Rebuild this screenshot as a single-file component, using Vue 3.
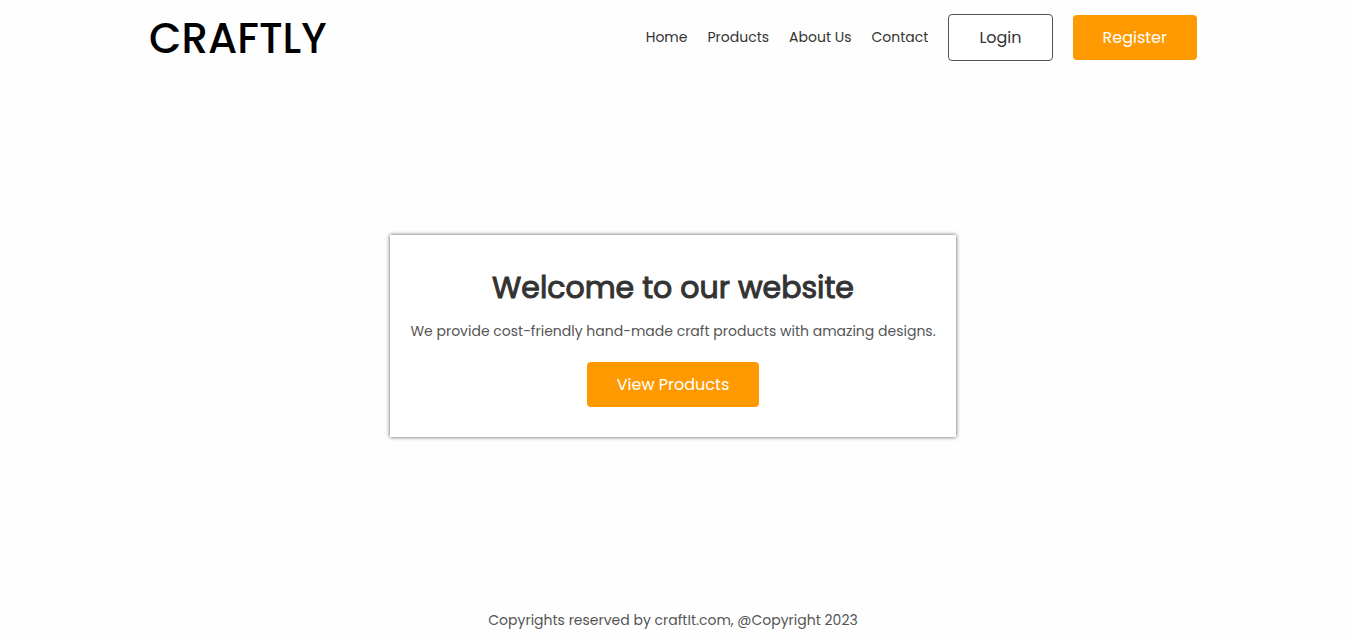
<script setup>
const links = ['Home', 'Products', 'About Us', 'Contact']
</script>

<template>
  <div class="page">
    <header class="header">
      <a class="logo" href="#">CRAFTLY</a>
      <nav class="nav" aria-label="Main">
        <a v-for="link in links" :key="link" class="link" href="#">{{ link }}</a>
        <button type="button" class="button outline">Login</button>
        <button type="button" class="button">Register</button>
      </nav>
    </header>
    <main class="main">
      <section class="card">
        <h1 class="title">Welcome to our website</h1>
        <p class="text">We provide cost-friendly hand-made craft products with amazing designs.</p>
        <button type="button" class="button">View Products</button>
      </section>
    </main>
    <footer class="footer">Copyrights reserved by craftIt.com, @Copyright 2023</footer>
  </div>
</template>

<style>
body {
  margin: 0;
  background: #fefefe;
}
</style>

<style scoped>
.page {
  display: flex;
  flex-direction: column;
  box-sizing: border-box;
  min-height: 100vh;
  padding-right: 4px;
  font-family: Poppins, Inter, "Open Sans", sans-serif;
  font-weight: 400;
  font-size: 14px;
  line-height: 21px;
  color: #555;
}
.header {
  display: flex;
  align-items: center;
  justify-content: space-between;
  box-sizing: border-box;
  width: 100%;
  max-width: 1048px;
  min-height: 75px;
  margin: 0 auto;
}
.logo {
  padding-top: 2px;
  color: #000;
  font-size: 42px;
  font-weight: 500;
  line-height: 63px;
  text-decoration: none;
}
.nav {
  display: flex;
  align-items: center;
  gap: 20px;
}
.link {
  color: #333;
  text-decoration: none;
  white-space: nowrap;
}
.button {
  padding: 10px 30px;
  border: 0;
  border-radius: 4px;
  background: #ff9900;
  color: #fff;
  font-family: inherit;
  font-size: 16px;
  font-weight: 400;
  line-height: 25px;
  white-space: nowrap;
  cursor: pointer;
}
.outline {
  border: 1px solid #555;
  background: #fff;
  color: #333;
}
.main {
  display: flex;
  flex: 1;
  align-items: center;
  justify-content: center;
  padding-top: 10px;
}
.card {
  display: flex;
  flex-direction: column;
  align-items: center;
  padding: 30px 20px;
  background: #fff;
  box-shadow: 0 0 4px #555;
  text-align: center;
}
.title {
  margin: 0;
  color: #333;
  font-size: 30px;
  font-weight: 400;
  line-height: 46px;
  -webkit-text-stroke: 1px #333;
}
.text {
  margin: 10px 0 20px;
}
.footer {
  padding: 24px 0 6px;
  text-align: center;
}
</style>
